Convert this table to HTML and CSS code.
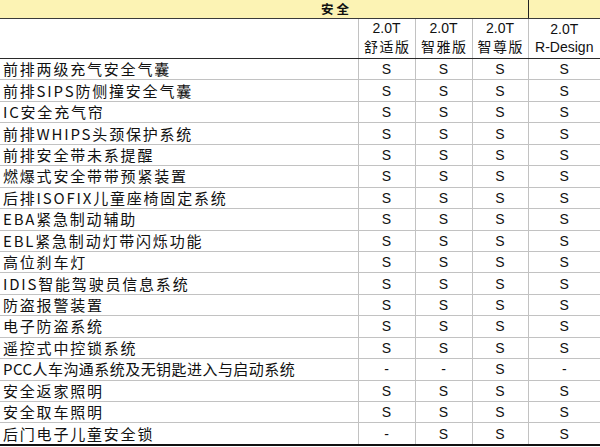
FILE: index.html
```html
<!DOCTYPE html>
<html lang="zh">
<head>
<meta charset="utf-8">
<title>安全配置</title>
<link rel="stylesheet" href="styles.css">
</head>
<body>
<table class="spec">
  <colgroup>
    <col class="c-label"><col class="c-v"><col class="c-v"><col class="c-v3"><col class="c-v4">
  </colgroup>
  <tr class="title-row">
    <td colspan="4" class="title">安全</td>
    <td class="title-end"></td>
  </tr>
  <tr class="head-row">
    <td></td>
    <td>2.0T<br><span class="cjk">舒适版</span></td>
    <td>2.0T<br><span class="cjk">智雅版</span></td>
    <td>2.0T<br><span class="cjk">智尊版</span></td>
    <td>2.0T<br>R-Design</td>
  </tr>
  <tr><td class="label">前排两级充气安全气囊</td><td>S</td><td>S</td><td>S</td><td>S</td></tr>
  <tr><td class="label">前排SIPS防侧撞安全气囊</td><td>S</td><td>S</td><td>S</td><td>S</td></tr>
  <tr><td class="label">IC安全充气帘</td><td>S</td><td>S</td><td>S</td><td>S</td></tr>
  <tr><td class="label">前排WHIPS头颈保护系统</td><td>S</td><td>S</td><td>S</td><td>S</td></tr>
  <tr><td class="label">前排安全带未系提醒</td><td>S</td><td>S</td><td>S</td><td>S</td></tr>
  <tr><td class="label">燃爆式安全带带预紧装置</td><td>S</td><td>S</td><td>S</td><td>S</td></tr>
  <tr><td class="label">后排ISOFIX儿童座椅固定系统</td><td>S</td><td>S</td><td>S</td><td>S</td></tr>
  <tr><td class="label">EBA紧急制动辅助</td><td>S</td><td>S</td><td>S</td><td>S</td></tr>
  <tr><td class="label">EBL紧急制动灯带闪烁功能</td><td>S</td><td>S</td><td>S</td><td>S</td></tr>
  <tr><td class="label">高位刹车灯</td><td>S</td><td>S</td><td>S</td><td>S</td></tr>
  <tr><td class="label">IDIS智能驾驶员信息系统</td><td>S</td><td>S</td><td>S</td><td>S</td></tr>
  <tr><td class="label">防盗报警装置</td><td>S</td><td>S</td><td>S</td><td>S</td></tr>
  <tr><td class="label">电子防盗系统</td><td>S</td><td>S</td><td>S</td><td>S</td></tr>
  <tr><td class="label">遥控式中控锁系统</td><td>S</td><td>S</td><td>S</td><td>S</td></tr>
  <tr><td class="label shrink">PCC人车沟通系统及无钥匙进入与启动系统</td><td>-</td><td>-</td><td>S</td><td>-</td></tr>
  <tr><td class="label">安全返家照明</td><td>S</td><td>S</td><td>S</td><td>S</td></tr>
  <tr><td class="label">安全取车照明</td><td>S</td><td>S</td><td>S</td><td>S</td></tr>
  <tr class="last"><td class="label">后门电子儿童安全锁</td><td>-</td><td>S</td><td>S</td><td>S</td></tr>
</table>
</body>
</html>
```

FILE: styles.css
```css
html, body {
  margin: 0;
  padding: 0;
  background: #ffffff;
}

.spec {
  width: 600px;
  table-layout: fixed;
  border-collapse: collapse;
  font-family: "Liberation Sans", "Noto Sans CJK SC", sans-serif;
  font-size: 14px;
  color: #111;
}

.c-label { width: 358px; }
.c-v { width: 57px; }
.c-v3 { width: 56px; }
.c-v4 { width: 72px; }

.spec td {
  border: 1px solid #c2c2c2;
  padding: 0;
  text-align: center;
  vertical-align: middle;
  white-space: nowrap;
}

.spec tr td:first-child { border-left: none; }
.spec tr td:last-child { border-right: none; }

.title-row td {
  height: 17px;
  background: #fcf3b4;
  border-top: none;
  border-bottom: 1px solid #3a3a3a;
}

.spec td.title {
  text-align: left;
  padding-left: 321px;
  font-family: "Noto Sans CJK SC", sans-serif;
  font-weight: bold;
  font-size: 12.5px;
  letter-spacing: 3px;
  line-height: 18px;
  border-right: 1px solid #222;
}

.head-row td {
  height: 37px;
  line-height: 18px;
  border-bottom: 1px solid #2a2a2a;
  font-size: 14px;
  vertical-align: bottom;
  padding-bottom: 2px;
}

.cjk {
  font-family: "Noto Sans CJK SC", sans-serif;
  font-size: 14px;
  letter-spacing: 1.5px;
  margin-right: -1.5px;
}

.spec td.label {
  text-align: left;
  padding-left: 3px;
  font-family: "Noto Sans CJK SC", sans-serif;
  font-size: 15px;
  letter-spacing: 1.8px;
  line-height: 18px;
}

.spec tr:not(.title-row):not(.head-row) td {
  height: 20.45px;
}

.spec td.label.shrink {
  letter-spacing: 0.45px;
}

.spec tr.last td {
  border-bottom: 2px solid #111;
}
```
